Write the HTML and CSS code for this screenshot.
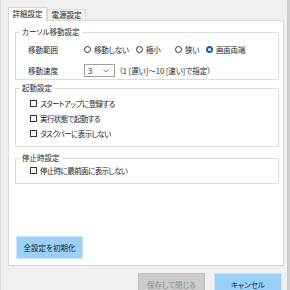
FILE: index.html
```html
<!DOCTYPE html>
<html lang="ja">
<head>
<meta charset="utf-8">
<link rel="stylesheet" href="styles.css">
</head>
<body>
<div class="window">
  <div class="tabs">
    <div class="tab active">詳細設定</div>
    <div class="tab">電源設定</div>
  </div>
  <div class="panel">
    <fieldset class="group g1">
      <legend>カーソル移動設定</legend>
      <div class="row">
        <span class="label">移動範囲</span>
        <span class="opt o1"><span class="radio"></span>移動しない</span>
        <span class="opt o2"><span class="radio"></span>極小</span>
        <span class="opt o3"><span class="radio"></span>狭い</span>
        <span class="opt"><span class="radio on"></span>画面両端</span>
      </div>
      <div class="row speed">
        <span class="label">移動速度</span>
        <span class="select">3<svg class="chev" width="6" height="4" viewBox="0 0 6 4"><polyline points="0.5,0.5 3,3 5.5,0.5" fill="none" stroke="#555" stroke-width="0.8"/></svg></span>
        <span class="note">（1 [遅い]～10 [速い]で指定）</span>
      </div>
    </fieldset>
    <fieldset class="group g2">
      <legend>起動設定</legend>
      <div class="check"><span class="box"></span>スタートアップに登録する</div>
      <div class="check"><span class="box"></span>実行状態で起動する</div>
      <div class="check"><span class="box"></span>タスクバーに表示しない</div>
    </fieldset>
    <fieldset class="group g3">
      <legend>停止時設定</legend>
      <div class="check"><span class="box"></span>停止時に最前面に表示しない</div>
    </fieldset>
    <button class="btn reset">全設定を初期化</button>
  </div>
  <div class="footer">
    <button class="btn disabled">保存して閉じる</button>
    <button class="btn primary">キャンセル</button>
  </div>
</div>
</body>
</html>
```
FILE: styles.css
```css
* { box-sizing: border-box; }
html, body { margin: 0; padding: 0; }
body {
  background: #f0f0f0;
  font-family: "Noto Sans CJK JP", "Noto Sans", sans-serif;
  font-size: 7.5px;
  font-feature-settings: "palt";
  color: #222;
}
.window {
  width: 290px;
  height: 290px;
  overflow: hidden;
  border-right: 3px solid #cdcdcd;
  border-left: 1px solid #dedede;
  padding-left: 7px;
  display: flex;
  flex-direction: column;
}
.tabs {
  display: flex;
  flex-shrink: 0;
  margin-top: 7px;
  height: 13px;
  align-items: flex-start;
}
.tab {
  width: 39px;
  height: 11px;
  margin-top: 2px;
  border: 1px solid #d9d9d9;
  border-bottom: none;
  background: #f0f0f0;
  text-align: center;
  line-height: 10px;
  color: #222;
}
.tab.active {
  height: 14px;
  margin-top: 0;
  background: #fff;
  position: relative;
  z-index: 1;
  line-height: 12px;
}
.panel {
  flex-shrink: 0;
  width: 276px;
  height: 246px;
  background: #fff;
  border: 1px solid #d9d9d9;
  padding: 6px 4px 6px 6px;
  display: flex;
  flex-direction: column;
}
.group {
  flex-shrink: 0;
  margin: 0;
  border: 1px solid #dcdcdc;
  padding: 0;
  min-width: 0;
}
.group legend {
  padding: 0 2px;
  margin-left: 4px;
  line-height: 10px;
  color: #222;
}
.g1 { padding-top: 6px; height: 53px; }
.g2 { margin-top: 3px; padding-top: 3px; height: 64px; }
.g3 { margin-top: 6px; padding-top: 0; height: 31px; }
.row {
  display: flex;
  align-items: center;
  height: 12px;
}
.row.speed {
  height: 13px;
  margin-top: 9px;
}
.label {
  width: 67px;
  padding-left: 12px;
  flex-shrink: 0;
}
.opt {
  display: flex;
  align-items: center;
  flex-shrink: 0;
  letter-spacing: -0.2px;
}
.o1 { width: 52px; }
.o2 { width: 39px; }
.o3 { width: 31px; }
.radio {
  width: 7px;
  height: 7px;
  border: 1px solid #333;
  border-radius: 50%;
  margin-left: 1px;
  margin-right: 3px;
  background: #fff;
}
.radio.on {
  border: 2px solid #1060c0;
}
.select {
  width: 31px;
  height: 13px;
  border: 1px solid #a0a0a0;
  display: flex;
  align-items: center;
  justify-content: space-between;
  padding: 0 5px 0 3px;
  margin-left: 1px;
}
.chev { display: block; }
.note { margin-left: 4px; }
.check {
  display: flex;
  align-items: center;
  height: 15px;
  padding-left: 14px;
  letter-spacing: -0.6px;
}
.box {
  width: 7px;
  height: 7px;
  border: 1px solid #333;
  margin-right: 3px;
  background: #fff;
}
.btn {
  font: inherit;
  font-feature-settings: "palt";
  border: 1px solid #cce4f7;
  background: #99d1fa;
  color: #222;
  padding: 0;
  height: 23px;
}
.reset {
  margin-top: auto;
  width: 67px;
  margin-left: 1px;
  flex-shrink: 0;
}
.footer {
  display: flex;
  flex-shrink: 0;
  justify-content: flex-end;
  gap: 9px;
  margin-top: 7px;
  padding-right: 5px;
}
.footer .btn { width: 67px; height: 22px; }
.btn.disabled {
  background: #cccccc;
  border-color: #bfbfbf;
  color: #8a8a8a;
}
.btn.primary {
  width: 68px;
}
```
